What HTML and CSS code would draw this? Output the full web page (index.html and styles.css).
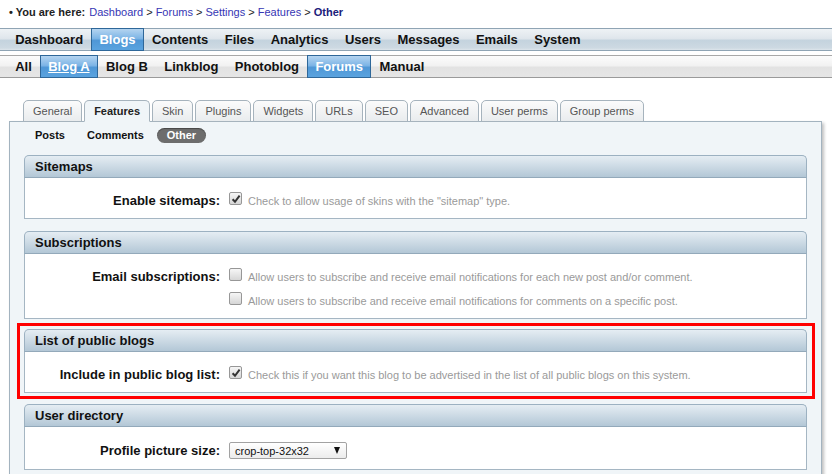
FILE: index.html
```html
<!DOCTYPE html>
<html>
<head>
<meta charset="utf-8">
<title>Blog settings - Features - Other</title>
<link rel="stylesheet" href="styles.css">
</head>
<body>

<div class="crumbs">
    <b>&bull; You are here:</b>
    <a href="#">Dashboard</a> &gt;
    <a href="#">Forums</a> &gt;
    <a href="#">Settings</a> &gt;
    <a href="#">Features</a> &gt;
    <b class="here">Other</b>
</div>

<div class="menu menu-top">
    <a href="#">Dashboard</a>
    <a href="#" class="selected">Blogs</a>
    <a href="#">Contents</a>
    <a href="#">Files</a>
    <a href="#">Analytics</a>
    <a href="#">Users</a>
    <a href="#">Messages</a>
    <a href="#">Emails</a>
    <a href="#">System</a>
</div>

<div class="menu menu-sub">
    <a href="#">All</a>
    <a href="#" class="selected underline">Blog A</a>
    <a href="#">Blog B</a>
    <a href="#">Linkblog</a>
    <a href="#">Photoblog</a>
    <a href="#" class="selected">Forums</a>
    <a href="#">Manual</a>
</div>

<div class="content">
    <div class="tabs">
        <a href="#">General</a>
        <a href="#" class="current">Features</a>
        <a href="#">Skin</a>
        <a href="#">Plugins</a>
        <a href="#">Widgets</a>
        <a href="#">URLs</a>
        <a href="#">SEO</a>
        <a href="#">Advanced</a>
        <a href="#">User perms</a>
        <a href="#">Group perms</a>
    </div>

    <div class="panel">
        <div class="subtabs">
            <a href="#">Posts</a>
            <a href="#">Comments</a>
            <a href="#" class="current">Other</a>
        </div>

        <div class="fieldset first">
            <div class="legend">Sitemaps</div>
            <div class="fs-body">
                <div class="row">
                    <label>Enable sitemaps:</label>
                    <div class="field">
                        <span class="check"><svg width="12" height="12" viewBox="0 0 12 12"><path d="M2.6 6.2 L5 8.8 L9.6 2.6" fill="none" stroke="#333" stroke-width="2"/></svg></span>
                        <span class="note">Check to allow usage of skins with the "sitemap" type.</span>
                    </div>
                </div>
            </div>
        </div>

        <div class="fieldset">
            <div class="legend">Subscriptions</div>
            <div class="fs-body">
                <div class="row">
                    <label>Email subscriptions:</label>
                    <div class="field">
                        <span class="check"></span>
                        <span class="note">Allow users to subscribe and receive email notifications for each new post and/or comment.</span>
                    </div>
                </div>
                <div class="row row-last">
                    <label></label>
                    <div class="field">
                        <span class="check"></span>
                        <span class="note">Allow users to subscribe and receive email notifications for comments on a specific post.</span>
                    </div>
                </div>
            </div>
        </div>

        <div class="highlight">
            <div class="fieldset">
                <div class="legend">List of public blogs</div>
                <div class="fs-body">
                    <div class="row">
                        <label>Include in public blog list:</label>
                        <div class="field">
                            <span class="check"><svg width="12" height="12" viewBox="0 0 12 12"><path d="M2.6 6.2 L5 8.8 L9.6 2.6" fill="none" stroke="#333" stroke-width="2"/></svg></span>
                            <span class="note">Check this if you want this blog to be advertised in the list of all public blogs on this system.</span>
                        </div>
                    </div>
                </div>
            </div>
        </div>

        <div class="fieldset">
            <div class="legend">User directory</div>
            <div class="fs-body">
                <div class="row row-select">
                    <label>Profile picture size:</label>
                    <div class="field">
                        <div class="select"><span>crop-top-32x32</span><i class="arrow"></i></div>
                    </div>
                </div>
            </div>
        </div>
    </div>
</div>

</body>
</html>
```

FILE: styles.css
```css
body {
    margin: 0;
    font-family: "Liberation Sans", Arial, sans-serif;
    font-size: 13px;
    color: #111;
    background: #fff;
}
a {
    text-decoration: none;
}

/* breadcrumb */
.crumbs {
    height: 28px;
    padding: 0 9px;
    box-sizing: border-box;
    line-height: 24px;
    font-size: 11px;
    color: #222;
}
.crumbs b {
    margin-right: 1px;
}
.crumbs a {
    color: #3636b4;
}
.crumbs .here {
    color: #20207a;
}

/* main menus */
.menu {
    display: flex;
    padding-left: 7px;
    height: 21px;
    border-top: 1px solid #8fa4b4;
    border-bottom: 1px solid #8fa4b4;
    background: linear-gradient(#eef2f5 0%, #dfe6ec 45%, #c4d3de 55%, #cdd9e2 90%, #dde5eb 100%);
}
.menu a {
    display: block;
    margin: -1px 0;
    padding: 0 7.2px;
    border: 1px solid transparent;
    line-height: 21px;
    font-weight: bold;
    color: #111;
}
.menu a.selected {
    color: #fff;
    border-color: #2e6799;
    background: linear-gradient(#b4d4f0 0%, #7db5e6 45%, #4f97d6 55%, #5aa3df 100%);
}
.menu a.underline {
    text-decoration: underline;
}
.menu-sub {
    margin-top: 4px;
    border-top-color: #a8a8a8;
    border-bottom-color: #9a9a9a;
    background: linear-gradient(#fcfcfc 0%, #f2f2f2 45%, #e2e2e2 55%, #e6e6e6 100%);
}

/* tabs + panel */
.content {
    margin: 22px 10px 0 9px;
}
.tabs {
    display: flex;
    gap: 2px;
    margin-left: 14px;
    position: relative;
    z-index: 1;
    margin-bottom: -1px;
}
.tabs a {
    display: block;
    padding: 0 9px;
    height: 20px;
    line-height: 20px;
    font-size: 11px;
    color: #555;
    border: 1px solid #a6b3bd;
    border-radius: 5px 5px 0 0;
    background: linear-gradient(#fbfbfb, #e9ecee);
}
.tabs a.current {
    font-weight: bold;
    color: #222;
    background: #f0f5f8;
    border-bottom-color: #f0f5f8;
}
.panel {
    display: flex;
    flex-direction: column;
    padding: 6px 14px 0 14px;
    height: 400px;
    border: 1px solid #a3b3bf;
    background: #f0f5f8;
    box-shadow: 2px 2px 3px rgba(0, 0, 0, 0.25);
}
.subtabs {
    display: flex;
    margin-bottom: 12px;
}
.subtabs a {
    display: block;
    padding: 0 11px;
    height: 15px;
    line-height: 15px;
    font-size: 11px;
    font-weight: bold;
    color: #111;
}
.subtabs a.current {
    margin-left: 2px;
    padding: 0 10px;
    border-radius: 8px;
    color: #fff;
    background: #6d6d6d;
    box-shadow: inset 0 1px 1px rgba(0, 0, 0, 0.35);
}

/* fieldsets */
.fieldset {
    margin-top: 12px;
}
.fieldset.first {
    margin-top: 0;
}
.legend {
    height: 21px;
    line-height: 21px;
    padding-left: 10px;
    font-weight: bold;
    border: 1px solid #9cb1c1;
    border-bottom-color: #93a9ba;
    border-radius: 5px 5px 0 0;
    background: linear-gradient(#e5edf3, #b3c7d6);
}
.fs-body {
    padding: 10px 0 5px;
    background: #fff;
    border: 1px solid #a5b6c3;
    border-top: 0;
}
.row {
    display: flex;
    align-items: center;
    height: 25px;
}
.row-last {
    height: 24px;
}
.row label {
    width: 195px;
    margin-right: 9px;
    text-align: right;
    font-weight: bold;
}
.field {
    display: flex;
    align-items: center;
}
.check {
    width: 11px;
    height: 11px;
    margin-right: 6px;
    margin-bottom: 5px;
    border: 1px solid #979797;
    border-radius: 2px;
    background: linear-gradient(#f6f6f6, #d6d6d6);
}
.check svg {
    display: block;
}
.note {
    font-size: 11px;
    color: #9a9a9a;
}
.row-select {
    height: 27px;
}
.select {
    display: flex;
    align-items: center;
    justify-content: space-between;
    width: 105px;
    height: 15px;
    padding: 0 6px 0 5px;
    border: 1px solid #a2a2a2;
    border-radius: 2px;
    font-size: 11px;
    color: #111;
    background: linear-gradient(#ffffff, #ececec);
}
.arrow {
    width: 0;
    height: 0;
    border-left: 3.5px solid transparent;
    border-right: 3.5px solid transparent;
    border-top: 7px solid #111;
}

/* red annotation box */
.highlight {
    margin: 4px -8px 0 -7px;
    padding: 3px 5px 3px 4px;
    border: 3px solid #ff0000;
}
.highlight .fieldset {
    margin-top: 0;
}
.highlight + .fieldset {
    margin-top: 5px;
}
```
